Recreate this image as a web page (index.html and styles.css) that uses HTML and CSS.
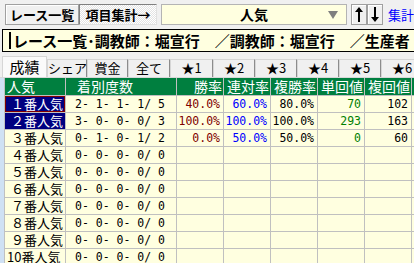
FILE: index.html
```html
<!DOCTYPE html>
<html lang="ja">
<head>
    <meta charset="UTF-8">
    <title>項目集計</title>
    <link rel="stylesheet" href="styles.css">
</head>
<body>
    <div class="toolbar">
        <button class="btn btn-list">レース一覧</button>
        <button class="btn btn-sum">項目集計→</button>
        <div class="combo">
            <span class="combo-text">人気</span>
            <svg class="combo-arrow" width="10" height="8" viewBox="0 0 10 8"><path d="M0 0H10L5 8Z" fill="#7f7f7f"/></svg>
        </div>
        <button class="arrow-btn">
            <svg width="8" height="15" viewBox="0 0 8 15"><path d="M4 0L8 5H5V15H3V5H0Z" fill="#000"/></svg>
        </button>
        <button class="arrow-btn">
            <svg width="8" height="15" viewBox="0 0 8 15"><path d="M4 15L8 10H5V0H3V10H0Z" fill="#000"/></svg>
        </button>
        <a class="link">集計</a>
    </div>

    <div class="title"><span class="caret"></span>レース一覧･調教師：堀宣行　／調教師：堀宣行　／生産者：ノーザンファーム</div>

    <div class="tabs">
        <div class="tab active w45">成績</div>
        <div class="tab w40">シェア</div>
        <div class="tab w41">賞金</div>
        <div class="tab w42">全て</div>
        <div class="tab w43">★1</div>
        <div class="tab w42">★2</div>
        <div class="tab w42">★3</div>
        <div class="tab w42">★4</div>
        <div class="tab w42">★5</div>
        <div class="tab w42">★6</div>
    </div>

    <div class="sheet">
        <div class="grid">
            <div class="hd">人気</div>
            <div class="hd hd-count">着別度数</div>
            <div class="hd hd-num">勝率</div>
            <div class="hd hd-num">連対率</div>
            <div class="hd hd-num">複勝率</div>
            <div class="hd hd-num">単回値</div>
            <div class="hd hd-num">複回値</div>
            <div class="hd"></div>

            <div class="rh sel focus">１番人気</div>
            <div class="cnt">2- 1- 1- 1/ 5</div>
            <div class="num red">40.0%</div>
            <div class="num blue">60.0%</div>
            <div class="num">80.0%</div>
            <div class="num green">70</div>
            <div class="num">102</div>
            <div class="cell"></div>

            <div class="rh sel">２番人気</div>
            <div class="cnt">3- 0- 0- 0/ 3</div>
            <div class="num red">100.0%</div>
            <div class="num blue">100.0%</div>
            <div class="num">100.0%</div>
            <div class="num green">293</div>
            <div class="num">163</div>
            <div class="cell"></div>

            <div class="rh">３番人気</div>
            <div class="cnt">0- 1- 0- 1/ 2</div>
            <div class="num red">0.0%</div>
            <div class="num blue">50.0%</div>
            <div class="num">50.0%</div>
            <div class="num green">0</div>
            <div class="num">60</div>
            <div class="cell"></div>

            <div class="rh">４番人気</div><div class="cnt">0- 0- 0- 0/ 0</div>
            <div class="cell"></div><div class="cell"></div><div class="cell"></div><div class="cell"></div><div class="cell"></div><div class="cell"></div>

            <div class="rh">５番人気</div><div class="cnt">0- 0- 0- 0/ 0</div>
            <div class="cell"></div><div class="cell"></div><div class="cell"></div><div class="cell"></div><div class="cell"></div><div class="cell"></div>

            <div class="rh">６番人気</div><div class="cnt">0- 0- 0- 0/ 0</div>
            <div class="cell"></div><div class="cell"></div><div class="cell"></div><div class="cell"></div><div class="cell"></div><div class="cell"></div>

            <div class="rh">７番人気</div><div class="cnt">0- 0- 0- 0/ 0</div>
            <div class="cell"></div><div class="cell"></div><div class="cell"></div><div class="cell"></div><div class="cell"></div><div class="cell"></div>

            <div class="rh">８番人気</div><div class="cnt">0- 0- 0- 0/ 0</div>
            <div class="cell"></div><div class="cell"></div><div class="cell"></div><div class="cell"></div><div class="cell"></div><div class="cell"></div>

            <div class="rh">９番人気</div><div class="cnt">0- 0- 0- 0/ 0</div>
            <div class="cell"></div><div class="cell"></div><div class="cell"></div><div class="cell"></div><div class="cell"></div><div class="cell"></div>

            <div class="rh ten">10番人気</div><div class="cnt">0- 0- 0- 0/ 0</div>
            <div class="cell"></div><div class="cell"></div><div class="cell"></div><div class="cell"></div><div class="cell"></div><div class="cell"></div>
        </div>
    </div>
</body>
</html>
```

FILE: styles.css
```css
body {
    margin: 0;
    width: 414px;
    height: 263px;
    overflow: hidden;
    background-color: #f0f0f0;
    font-family: "Noto Sans CJK JP", sans-serif;
    color: #000;
}

/* top toolbar */
.toolbar {
    display: flex;
    align-items: center;
    height: 21px;
    padding: 4px 0 0 5px;
}

.btn {
    box-sizing: border-box;
    height: 21px;
    padding: 0;
    border: 1px solid #a0a0a0;
    box-shadow: inset 1px 1px #fff;
    background-color: #f0f0f0;
    font: bold 13px/19px "Noto Sans CJK JP", sans-serif;
    color: #000;
}

.btn-list {
    width: 75px;
}

.btn-sum {
    width: 78px;
    border-color: #808080 #e0e0e0 #e0e0e0 #808080;
    box-shadow: none;
    background: repeating-conic-gradient(#ffffff 0 25%, #e4e4e4 0 50%) 0 0 / 2px 2px;
}

.combo {
    box-sizing: border-box;
    display: flex;
    align-items: center;
    justify-content: center;
    position: relative;
    width: 188px;
    height: 21px;
    margin-left: 4px;
    border: 1px solid #b4b4b4;
    background-color: #ffffe0;
}

.combo-text {
    font: bold 14px/19px "Noto Sans CJK JP", sans-serif;
}

.combo-arrow {
    position: absolute;
    right: 8px;
    top: 6px;
}

.arrow-btn {
    box-sizing: border-box;
    display: flex;
    align-items: center;
    justify-content: center;
    width: 16px;
    height: 21px;
    padding: 0;
    border: 1px solid #a0a0a0;
    box-shadow: inset 1px 1px #fff;
    background-color: #f0f0f0;
}

.combo + .arrow-btn {
    margin-left: 4px;
}

.link {
    margin-left: 5px;
    font-size: 13px;
    line-height: 17px;
    color: #0000ff;
    white-space: nowrap;
}

/* condition line */
.title {
    box-sizing: border-box;
    display: flex;
    align-items: center;
    height: 23px;
    margin: 4px 0 0 2px;
    padding-left: 6px;
    border: 1px solid #000;
    border-right: none;
    background-color: #ffffe0;
    font: bold 15px/21px "Noto Sans CJK JP", sans-serif;
    white-space: nowrap;
    overflow: hidden;
}

.caret {
    flex: none;
    width: 2px;
    height: 17px;
    margin-right: 2px;
    background-color: #000;
}

/* tabs */
.tabs {
    display: flex;
    align-items: flex-end;
    height: 25px;
    padding-left: 2px;
    border-bottom: 1px solid #d8d8d8;
    overflow: hidden;
}

.tab {
    box-sizing: border-box;
    flex: none;
    height: 18px;
    border: 1px solid #d6d6d6;
    border-right-color: #8c8c8c;
    border-bottom: none;
    background-color: #f0f0f0;
    font-size: 13px;
    line-height: 16px;
    text-align: center;
    white-space: nowrap;
    overflow: hidden;
}

.tab.active {
    height: 21px;
    background-color: #fafafa;
    border-color: #d6d6d6;
    font-size: 15px;
    line-height: 20px;
}

.w40 { width: 40px; }
.w41 { width: 41px; }
.w42 { width: 42px; }
.w43 { width: 43px; }
.w45 { width: 45px; }

/* sheet */
.sheet {
    height: 185px;
    padding-left: 4px;
    background-color: #cfe1f4;
    overflow: hidden;
}

.grid {
    display: grid;
    grid-template-columns: 60px 110px repeat(5, 46px) 10px;
    grid-template-rows: 17px;
    grid-auto-rows: 16px;
    gap: 1px;
    padding-left: 1px;
    background-color: #c0c0c0;
}

.hd {
    background-color: #007f3f;
    color: #fff;
    font-size: 14px;
    line-height: 17px;
    padding-left: 2px;
    white-space: nowrap;
    overflow: hidden;
}

.hd-count {
    padding-left: 11px;
}

.hd-num {
    padding: 0 1px 0 0;
    text-align: right;
}

.rh {
    background-color: #ffffe0;
    font-size: 13px;
    line-height: 16px;
    padding-left: 6px;
    white-space: nowrap;
    overflow: hidden;
}

.rh.ten {
    padding-left: 2px;
}

.rh.sel {
    background-color: #000080;
    color: #fff;
}

.rh.focus {
    box-shadow: inset 0 0 0 1px #800000;
}

.cell,
.cnt,
.num {
    background-color: #ffffe0;
}

.cnt,
.num {
    font-family: "DejaVu Sans Mono", monospace;
    font-size: 11.5px;
    line-height: 16px;
    white-space: pre;
    overflow: hidden;
}

.cnt {
    padding-left: 9px;
}

.num {
    padding-right: 3px;
    text-align: right;
}

.red { color: #800000; }
.blue { color: #0000ff; }
.green { color: #008000; }
```
